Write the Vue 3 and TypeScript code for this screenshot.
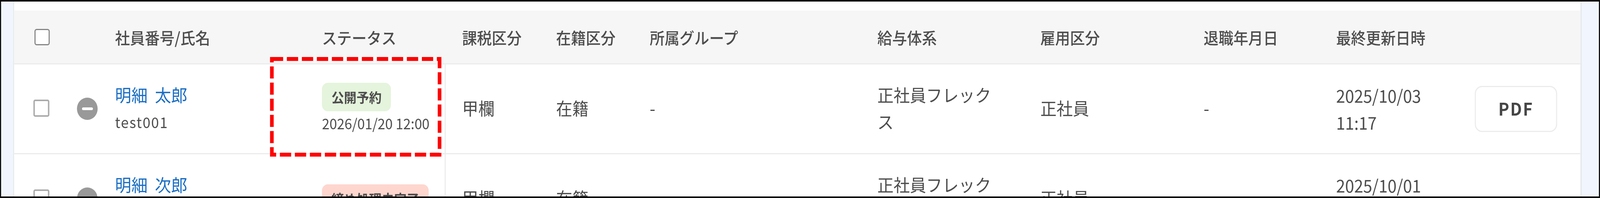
<script setup lang="ts">
import { ref, onMounted } from 'vue'

interface Row {
  first: string
  code: string
  badge: string
  tone: string
  scheduled?: string
  updated: string
}

const columns = ['社員番号/氏名', 'ステータス', '課税区分', '在籍区分', '所属グループ', '給与体系', '雇用区分', '退職年月日', '最終更新日時']

const rows: Row[] = [
  { first: '明細 太郎', code: 'test001', badge: '公開予約', tone: 'green', scheduled: '2026/01/20 12:00', updated: '2025/10/03 11:17' },
  { first: '明細 次郎', code: 'test002', badge: '締め処理未完了', tone: 'red', updated: '2025/10/01 10:42' }
]

const DESIGN_WIDTH = 4408
const fit = ref('none')
onMounted(() => {
  fit.value = `scaleX(${window.innerWidth / DESIGN_WIDTH})`
})
</script>

<template>
  <div class="viewport">
    <div class="shot" :style="{ transform: fit }">
      <div class="page">
        <div class="panel">
          <div class="grid head">
            <div class="cell"><span class="box box-head"></span></div>
            <div class="cell"></div>
            <div v-for="c in columns" :key="c" class="cell">{{ c }}</div>
            <div class="cell"></div>
          </div>
          <div v-for="r in rows" :key="r.code" class="grid row">
            <div class="cell lift"><span class="box"></span></div>
            <div class="cell"><span class="minus"><i></i></span></div>
            <div class="cell stack lift">
              <a class="name">{{ r.first }}</a>
              <span class="code">{{ r.code }}</span>
            </div>
            <div class="cell status">
              <span class="badge" :class="r.tone">{{ r.badge }}</span>
              <span v-if="r.scheduled" class="when">{{ r.scheduled }}</span>
            </div>
            <div class="cell lift">甲欄</div>
            <div class="cell lift">在籍</div>
            <div class="cell lift">-</div>
            <div class="cell lift wrap">正社員フレックス</div>
            <div class="cell lift">正社員</div>
            <div class="cell lift">-</div>
            <div class="cell date">{{ r.updated }}</div>
            <div class="cell"><button v-if="r.scheduled" class="pdf" type="button">PDF</button></div>
          </div>
        </div>
      </div>
      <svg class="mark" width="4408" height="507" viewBox="0 0 4408 507" aria-hidden="true">
        <rect x="749" y="151" width="462" height="245" fill="none" stroke="#ff0000" stroke-width="10" stroke-dasharray="31 10.33" />
      </svg>
      <div class="frame"></div>
    </div>
  </div>
</template>

<style>
html, body { margin: 0; padding: 0; background: #fff; overflow: hidden; }
</style>

<style scoped>
.viewport {
  width: 100vw;
  height: 507px;
  overflow: hidden;
}
.shot {
  position: relative;
  width: 4408px;
  height: 507px;
  transform-origin: 0 0;
  font-family: "Noto Sans CJK JP", "Noto Sans", sans-serif;
  color: #4d4d4d;
}
.page {
  height: 100%;
  box-sizing: border-box;
  padding: 0 50px 0 36px;
  background: #f1f6fe;
  filter: blur(0.7px);
}
.panel {
  height: 100%;
  box-sizing: border-box;
  padding-top: 27px;
  background: #fff;
  border-left: 3px solid #e6e9ee;
  border-right: 4px solid #e6e9ee;
  overflow: hidden;
}
.grid {
  display: grid;
  grid-template-columns: 120px 105px 570px 386px 259px 258px 627px 449px 450px 365px 384px 289px;
  padding-left: 53px;
  border-bottom: 3px solid #ececec;
}
.cell {
  display: flex;
  align-items: center;
  min-width: 0;
}
.lift {
  padding-bottom: 4px;
}
.head {
  height: 138px;
  box-sizing: border-box;
  background: #f6f6f6;
  font-size: 41px;
  font-weight: 500;
}
.row {
  height: 230px;
  box-sizing: border-box;
  font-size: 44.8px;
  line-height: 68.5px;
}
.box {
  display: block;
  width: 44px;
  height: 44px;
  box-sizing: border-box;
  background: #fff;
  border: 4px solid #ababab;
  border-radius: 5px;
}
.box-head {
  width: 42px;
  height: 42px;
  border-width: 3px;
  border-color: #858585;
  border-radius: 6px;
  margin-left: 3px;
}
.minus {
  display: flex;
  align-items: center;
  justify-content: center;
  width: 57px;
  height: 57px;
  border-radius: 50%;
  background: #999;
}
.minus i {
  display: block;
  width: 30px;
  height: 7px;
  border-radius: 4px;
  background: #fff;
}
.stack {
  flex-direction: column;
  align-items: flex-start;
  justify-content: center;
}
.name {
  color: #1a6dc3;
  word-spacing: 10px;
}
.code {
  font-size: 38.4px;
  letter-spacing: 2.3px;
}
.status {
  flex-direction: column;
  align-items: flex-start;
  justify-content: center;
  margin-right: 45px;
  border-right: 3px solid #ececec;
}
.badge {
  display: block;
  height: 73px;
  padding: 0 26px;
  border-radius: 16px;
  font-size: 34.6px;
  font-weight: 700;
  line-height: 73px;
  white-space: nowrap;
}
.green { background: #e5f4dc; }
.red { background: #fed6ce; }
.when {
  font-size: 37.3px;
  line-height: 60px;
}
.wrap {
  width: 320px;
}
.date {
  width: 240px;
}
.pdf {
  width: 227px;
  height: 118px;
  margin-left: -2px;
  padding: 0 0 4px;
  background: #fff;
  border: 3px solid #ececec;
  border-radius: 20px;
  color: #454545;
  font: 700 44.8px "Noto Sans CJK JP", "Noto Sans", sans-serif;
  letter-spacing: 3px;
}
.mark {
  position: absolute;
  left: 0;
  top: 0;
}
.frame {
  position: absolute;
  inset: 0;
  border: solid #0a0a0a;
  border-width: 4px 3px;
  pointer-events: none;
}
</style>
